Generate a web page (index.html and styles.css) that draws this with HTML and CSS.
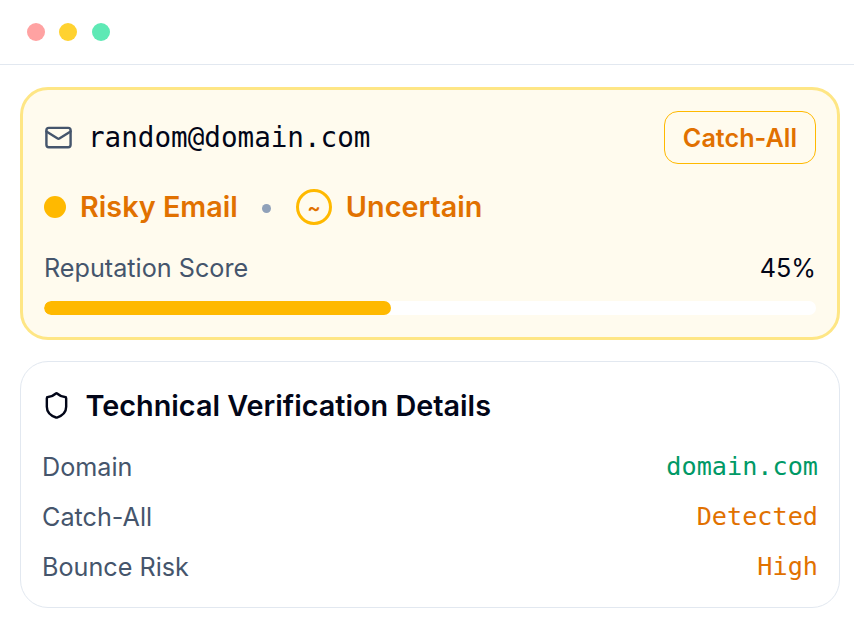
FILE: index.html
```html
<!DOCTYPE html>
<html lang="en">
<head>
  <meta charset="UTF-8" />
  <meta name="viewport" content="width=device-width, initial-scale=1" />
  <title>Email verification result</title>
  <link rel="stylesheet" href="styles.css">
</head>
<body>
  <header class="window-bar">
    <span class="dot dot-red"></span>
    <span class="dot dot-yellow"></span>
    <span class="dot dot-green"></span>
  </header>

  <main>
    <section class="card result">
      <div class="email-row">
        <svg class="mail-icon" viewBox="0 0 24 24" fill="none" stroke="currentColor" stroke-width="2" stroke-linecap="round" stroke-linejoin="round">
          <rect x="2" y="4" width="20" height="16" rx="2" />
          <path d="m22 7-8.97 5.7a1.94 1.94 0 0 1-2.06 0L2 7" />
        </svg>
        <span class="email">random@domain.com</span>
        <span class="badge">Catch-All</span>
      </div>

      <div class="status-row">
        <span class="status-dot"></span>
        <span class="risky">Risky Email</span>
        <span class="separator"></span>
        <span class="tilde">~</span>
        <span class="uncertain">Uncertain</span>
      </div>

      <div class="score-row">
        <span class="score-label">Reputation Score</span>
        <span class="score-value">45%</span>
      </div>
      <div class="progress">
        <div class="progress-fill" style="width: 45%"></div>
      </div>
    </section>

    <section class="card details">
      <h2>
        <svg class="shield-icon" viewBox="0 0 24 24" fill="none" stroke="currentColor" stroke-width="2" stroke-linecap="round" stroke-linejoin="round">
          <path d="M20 13c0 5-3.5 7.5-7.66 8.95a1 1 0 0 1-.67-.01C7.5 20.5 4 18 4 13V6a1 1 0 0 1 1-1c2 0 4.5-1.2 6.24-2.72a1.17 1.17 0 0 1 1.52 0C14.51 3.81 17 5 19 5a1 1 0 0 1 1 1z" />
        </svg>
        <span>Technical Verification Details</span>
      </h2>
      <dl>
        <div class="detail"><dt>Domain</dt><dd class="good">domain.com</dd></div>
        <div class="detail"><dt>Catch-All</dt><dd>Detected</dd></div>
        <div class="detail"><dt>Bounce Risk</dt><dd>High</dd></div>
      </dl>
    </section>
  </main>
</body>
</html>
```
FILE: styles.css
```css
* {
  box-sizing: border-box;
}
body {
  margin: 0;
  background: #fff;
  color: #020618;
  font-family: Inter, sans-serif;
  font-size: 25.2px;
}
.window-bar {
  display: flex;
  align-items: center;
  gap: 14px;
  height: 65px;
  padding: 0 27px;
  border-bottom: 1px solid #e2e8f0;
}
.dot {
  width: 18px;
  height: 18px;
  border-radius: 50%;
}
.dot-red { background: #ffa2a2; }
.dot-yellow { background: #ffd230; }
.dot-green { margin-left: 1px; background: #5ee9b5; }
main {
  padding: 22px 14px 0 20px;
}
.card {
  border-radius: 28px;
}
.result {
  height: 253px;
  padding: 21px 21px 0;
  background: #fffbee;
  border: 3px solid #fee685;
}
.email-row {
  display: flex;
  align-items: center;
  height: 53px;
}
.mail-icon {
  width: 29px;
  height: 29px;
  color: #45556c;
}
.email {
  margin-left: 15px;
  font-family: "DejaVu Sans Mono", monospace;
  font-size: 27.6px;
}
.badge {
  margin-left: auto;
  height: 53px;
  padding: 0 18px;
  line-height: 52px;
  border: 1px solid #ffb900;
  border-radius: 14px;
  color: #e17100;
  font-weight: 600;
}
.status-row {
  display: flex;
  align-items: center;
  height: 36px;
  margin-top: 25px;
  color: #e17100;
  font-size: 28.8px;
  font-weight: 600;
}
.risky,
.uncertain {
  padding-bottom: 2px;
}
.status-dot {
  width: 22px;
  height: 22px;
  margin-right: 14px;
  border-radius: 50%;
  background: #ffb900;
}
.separator {
  width: 9px;
  height: 9px;
  margin: 3px 24.5px 0;
  border-radius: 50%;
  background: #90a1b9;
}
.tilde {
  width: 36px;
  height: 36px;
  margin-right: 14px;
  border: 3px solid #ffb900;
  border-radius: 50%;
  font-size: 20px;
  line-height: 32px;
  text-align: center;
}
.score-row {
  display: flex;
  justify-content: space-between;
  margin-top: 25px;
  line-height: 36px;
}
.score-label {
  color: #45556c;
}
.progress {
  height: 14px;
  margin-top: 15px;
  border-radius: 7px;
  background: #fff;
  overflow: hidden;
}
.progress-fill {
  height: 100%;
  border-radius: 7px;
  background: #ffb900;
}
.details {
  height: 247px;
  margin-top: 21px;
  padding: 24px 21px 0;
  border: 1px solid #e2e8f0;
}
h2 {
  display: flex;
  align-items: center;
  gap: 14.5px;
  height: 38px;
  margin: 0;
  font-size: 28.8px;
  font-weight: 600;
}
.shield-icon {
  width: 29px;
  height: 29px;
}
dl {
  margin: 18px 0 0;
}
.detail {
  display: flex;
  justify-content: space-between;
  line-height: 50px;
}
dt {
  color: #45556c;
}
dd {
  margin: 0;
  color: #e17100;
  font-family: "DejaVu Sans Mono", monospace;
}
.good {
  color: #009966;
}
```
